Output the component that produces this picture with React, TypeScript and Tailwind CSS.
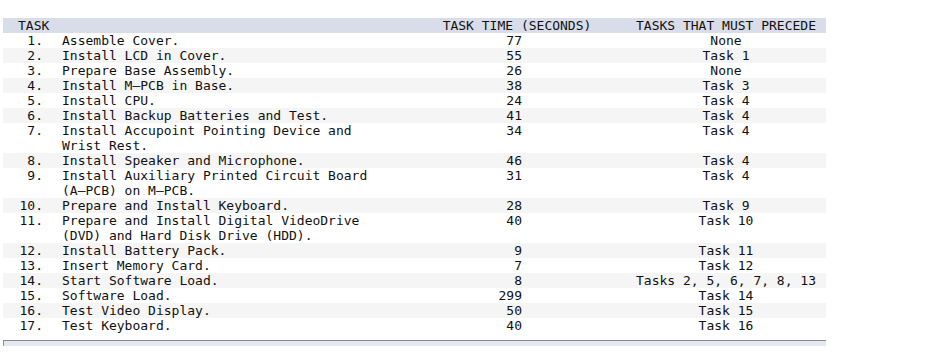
type Task = {
    n: number;
    name: string;
    time: number;
    precede: string;
};

const tasks: Task[] = [
    { n: 1, name: "Assemble Cover.", time: 77, precede: "None" },
    { n: 2, name: "Install LCD in Cover.", time: 55, precede: "Task 1" },
    { n: 3, name: "Prepare Base Assembly.", time: 26, precede: "None" },
    { n: 4, name: "Install M–PCB in Base.", time: 38, precede: "Task 3" },
    { n: 5, name: "Install CPU.", time: 24, precede: "Task 4" },
    { n: 6, name: "Install Backup Batteries and Test.", time: 41, precede: "Task 4" },
    { n: 7, name: "Install Accupoint Pointing Device and Wrist Rest.", time: 34, precede: "Task 4" },
    { n: 8, name: "Install Speaker and Microphone.", time: 46, precede: "Task 4" },
    { n: 9, name: "Install Auxiliary Printed Circuit Board (A–PCB) on M–PCB.", time: 31, precede: "Task 4" },
    { n: 10, name: "Prepare and Install Keyboard.", time: 28, precede: "Task 9" },
    { n: 11, name: "Prepare and Install Digital VideoDrive (DVD) and Hard Disk Drive (HDD).", time: 40, precede: "Task 10" },
    { n: 12, name: "Install Battery Pack.", time: 9, precede: "Task 11" },
    { n: 13, name: "Insert Memory Card.", time: 7, precede: "Task 12" },
    { n: 14, name: "Start Software Load.", time: 8, precede: "Tasks 2, 5, 6, 7, 8, 13" },
    { n: 15, name: "Software Load.", time: 299, precede: "Task 14" },
    { n: 16, name: "Test Video Display.", time: 50, precede: "Task 15" },
    { n: 17, name: "Test Keyboard.", time: 40, precede: "Task 16" },
];

export default function App() {
    return (
        <div className="w-[943px] h-[357px] bg-white pt-[18px] pl-[3px] text-[13px] leading-[15px] text-[#111] font-['DejaVu_Sans_Mono',monospace]">
            <div className="w-[823px]">
                <div className="flex bg-[#d9dde9]">
                    <div className="w-[405px] pl-[15px]">TASK</div>
                    <div className="w-[218px] text-center">TASK TIME (SECONDS)</div>
                    <div className="w-[200px] text-center">TASKS THAT MUST PRECEDE</div>
                </div>
                {tasks.map((t) => (
                    <div key={t.n} className={`flex ${t.n % 2 === 0 ? "bg-[#f5f5f5]" : "bg-white"}`}>
                        <div className="w-[45px] pr-[5px] text-right shrink-0">{t.n}.</div>
                        <div className="w-[360px] pl-[14px] pr-[26px] shrink-0">{t.name}</div>
                        <div className="w-[218px] pr-[104px] text-right shrink-0">{t.time}</div>
                        <div className="w-[200px] text-center shrink-0 whitespace-nowrap">{t.precede}</div>
                    </div>
                ))}
                <div className="mt-[7px] h-[6px] border-t border-l border-[#8c8c8c] bg-[#e4e8f2]" />
            </div>
        </div>
    );
}
